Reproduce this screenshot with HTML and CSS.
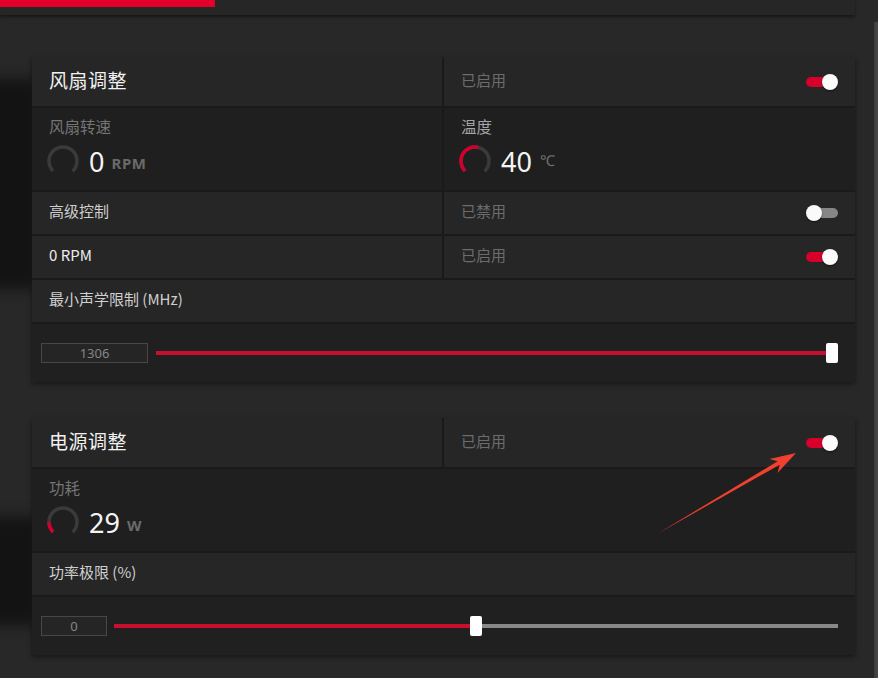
FILE: index.html
```html
<!DOCTYPE html>
<html lang="zh">
<head>
<meta charset="utf-8">
<link rel="stylesheet" href="styles.css">
</head>
<body>
<div class="main">
  <div class="topbar"><div class="topbar-red"></div></div>
  <div class="content">
    <div class="gutter">
      <div class="shade shade-1"></div>
      <div class="shade shade-2"></div>
    </div>
    <div class="cards">
      <section class="card">
        <div class="cell hdr"><span class="title">风扇调整</span></div>
        <div class="cell hdr sw"><span class="state">已启用</span><span class="toggle on"><i class="track"></i><i class="knob"></i></span></div>

        <div class="cell gauge">
          <span class="glabel">风扇转速</span>
          <div class="gv">
            <svg class="dial" width="34" height="34" viewBox="0 0 34 34"><circle cx="17" cy="17" r="14" class="ring" stroke-dasharray="65.97 100" transform="rotate(135 17 17)"/></svg>
            <span class="num">0</span><span class="unit rpm">RPM</span>
          </div>
        </div>
        <div class="cell gauge">
          <span class="glabel light">温度</span>
          <div class="gv">
            <svg class="dial" width="34" height="34" viewBox="0 0 34 34"><circle cx="17" cy="17" r="14" class="ring" stroke-dasharray="65.97 100" transform="rotate(135 17 17)"/><circle cx="17" cy="17" r="14" class="ring red" stroke-dasharray="36 100" transform="rotate(135 17 17)"/></svg>
            <span class="num">40</span><span class="unit cel">℃</span>
          </div>
        </div>

        <div class="cell row"><span class="label">高级控制</span></div>
        <div class="cell row sw"><span class="state">已禁用</span><span class="toggle off"><i class="knob"></i><i class="track"></i></span></div>

        <div class="cell row"><span class="label bright">0 RPM</span></div>
        <div class="cell row sw"><span class="state">已启用</span><span class="toggle on"><i class="track"></i><i class="knob"></i></span></div>

        <div class="cell row full"><span class="label">最小声学限制 (MHz)</span></div>

        <div class="cell slider full">
          <span class="val wide">1306</span>
          <div class="track-bar"><div class="fill" style="width:100%"></div><div class="thumb" style="left:100%"></div></div>
        </div>
      </section>

      <section class="card">
        <div class="cell hdr"><span class="title">电源调整</span></div>
        <div class="cell hdr sw"><span class="state">已启用</span><span class="toggle on"><i class="track"></i><i class="knob"></i></span></div>

        <div class="cell gauge full">
          <span class="glabel">功耗</span>
          <div class="gv">
            <svg class="dial" width="34" height="34" viewBox="0 0 34 34"><circle cx="17" cy="17" r="14" class="ring" stroke-dasharray="65.97 100" transform="rotate(135 17 17)"/><circle cx="17" cy="17" r="14" class="ring red" stroke-dasharray="11 100" transform="rotate(135 17 17)"/></svg>
            <span class="num">29</span><span class="unit w">W</span>
          </div>
        </div>

        <div class="cell row full"><span class="label">功率极限 (%)</span></div>

        <div class="cell slider full">
          <span class="val narrow">0</span>
          <div class="track-bar grey"><div class="fill" style="width:50%"></div><div class="thumb" style="left:50%"></div></div>
        </div>
      </section>
    </div>
  </div>
</div>
<div class="scroll-space"></div>
<div class="scrollbar"></div>

<svg class="annot" width="878" height="678" viewBox="0 0 878 678">
  <polygon points="657,534 779.7,464.7 777.5,472.9 796,453 769.5,459.1 777.7,461.3" fill="#f0402f"/>
</svg>
</body>
</html>
```

FILE: styles.css
```css
* { box-sizing: border-box; }

html, body {
  margin: 0;
  padding: 0;
}

body {
  width: 878px;
  height: 678px;
  overflow: hidden;
  background: #282828;
  display: flex;
  position: relative;
  font-family: "Noto Sans", "Noto Sans CJK SC", sans-serif;
  color: #e0e0e0;
}

.main {
  width: 855px;
  display: flex;
  flex-direction: column;
}

.topbar {
  height: 15px;
  background: #262626;
  box-shadow: 0 2px 3px rgba(0, 0, 0, 0.45);
  position: relative;
  z-index: 2;
}

.topbar-red {
  width: 215px;
  height: 7px;
  background: #e2002b;
}

.content {
  display: flex;
  flex: 1;
}

.gutter {
  width: 32px;
  overflow: hidden;
  display: flex;
  flex-direction: column;
}

.shade {
  background: #131313;
  filter: blur(7px);
  margin-left: -20px;
  width: 60px;
}

.shade-1 {
  margin-top: 64px;
  height: 210px;
}

.shade-2 {
  margin-top: 228px;
  height: 108px;
}

.cards {
  width: 823px;
  padding-top: 42px;
  display: flex;
  flex-direction: column;
  gap: 36px;
}

.card {
  display: grid;
  grid-template-columns: 410px 411px;
  gap: 2px;
  background: #1a1a1a;
  box-shadow: 0 2px 5px rgba(0, 0, 0, 0.45);
}

.cell {
  background: #262626;
  display: flex;
  align-items: center;
  padding: 0 17px;
}

.full { grid-column: 1 / -1; }

.hdr { height: 49px; }
.row { height: 42px; }

.sw { justify-content: space-between; }

.title {
  font-size: 19px;
  color: #f2f2f2;
  font-family: "Noto Sans CJK SC", sans-serif;
  letter-spacing: 0.5px;
  margin-bottom: 4px;
}

.state {
  font-size: 15px;
  color: #6c6c6c;
  font-family: "Noto Sans CJK SC", sans-serif;
  margin-bottom: 5px;
}

.label {
  font-size: 15px;
  color: #cfcfcf;
  font-family: "Noto Sans CJK SC", sans-serif;
  margin-bottom: 5px;
}

.label.bright { color: #ececec; }

/* toggles */
.toggle {
  width: 32px;
  height: 16px;
  display: flex;
  align-items: center;
}

.toggle i { display: block; }

.track {
  width: 24px;
  height: 10px;
  border-radius: 5px;
  background: #d6002b;
}

.knob {
  width: 16px;
  height: 16px;
  border-radius: 50%;
  background: #fafafa;
  box-shadow: 0 1px 2px rgba(0, 0, 0, 0.5);
  position: relative;
  z-index: 1;
}

.toggle.on .knob { margin-left: -8px; }
.toggle.off .track {
  margin-left: -8px;
  background: #868686;
}

/* gauges */
.gauge {
  height: 82px;
  background: #1f1f1f;
  flex-direction: column;
  align-items: flex-start;
  justify-content: flex-start;
  padding-top: 8px;
}

.glabel {
  font-size: 15.5px;
  line-height: 20px;
  color: #757575;
  font-family: "Noto Sans CJK SC", sans-serif;
}

.glabel.light { color: #a5a5a5; }

.gv {
  display: flex;
  align-items: center;
  margin-top: 8px;
  margin-left: -3px;
  height: 34px;
}

.dial { display: block; }

.ring {
  fill: none;
  stroke: #3a3a3a;
  stroke-width: 3.5;
}

.ring.red { stroke: #d4002c; }

.num {
  font-size: 27px;
  line-height: 1;
  color: #f4f4f4;
  margin-left: 9px;
}

.unit {
  color: #6a6a6a;
  margin-left: 7px;
}

.unit.rpm {
  font-size: 15px;
  font-weight: bold;
  margin-top: 3px;
  letter-spacing: 0.6px;
}

.unit.cel {
  font-size: 15px;
  margin-left: 8px;
  margin-top: -2px;
  color: #707070;
}

.unit.w {
  font-size: 15px;
  font-weight: bold;
  margin-top: 6px;
}

/* sliders */
.slider {
  height: 58px;
  background: #202020;
  padding: 0 17px 0 9px;
  gap: 8px;
}

.val {
  height: 20px;
  border: 1px solid #474747;
  background: #252525;
  color: #858585;
  font-size: 13px;
  line-height: 18px;
  text-align: center;
  flex: none;
}

.val.wide { width: 107px; }
.val.narrow { width: 66px; margin-right: -1px; }

.track-bar {
  flex: 1;
  height: 4px;
  position: relative;
  background: #c80f2e;
}

.track-bar.grey { background: #888888; }

.fill {
  height: 4px;
  background: #c80f2e;
}

.thumb {
  position: absolute;
  top: -8px;
  width: 12px;
  height: 20px;
  margin-left: -12px;
  background: #ffffff;
  border-radius: 2px;
}

.track-bar.grey .thumb { margin-left: -6px; }

/* right side */
.scroll-space { width: 19px; }

.scrollbar {
  width: 4px;
  margin-top: 22px;
  background: linear-gradient(to right, #3a3a3a, #4a4a4a);
}

.annot {
  position: absolute;
  left: 0;
  top: 0;
  pointer-events: none;
}
```
